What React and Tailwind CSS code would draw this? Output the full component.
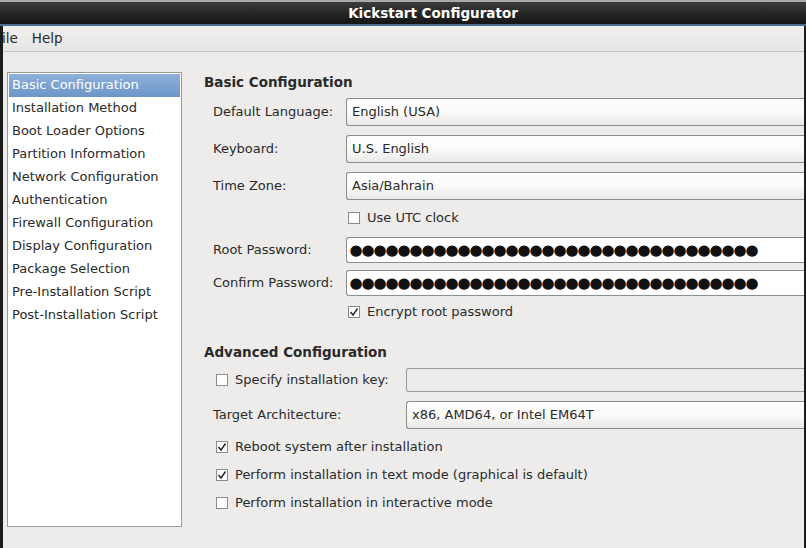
import React from 'react'

const font = { fontFamily: '"DejaVu Sans", "Liberation Sans", sans-serif' }

const navItems = [
  'Basic Configuration',
  'Installation Method',
  'Boot Loader Options',
  'Partition Information',
  'Network Configuration',
  'Authentication',
  'Firewall Configuration',
  'Display Configuration',
  'Package Selection',
  'Pre-Installation Script',
  'Post-Installation Script',
]

function Check({ checked }) {
  return (
    <span className="w-[12px] h-[12px] border border-[#8a8a88] bg-white flex items-center justify-center shrink-0">
      {checked && (
        <svg width="10" height="10" viewBox="0 0 10 10">
          <path d="M1.5 5 L4 8 L8.5 1.5" fill="none" stroke="#222" strokeWidth="1.4" />
        </svg>
      )}
    </span>
  )
}

function Combo({ value }) {
  return (
    <div className="flex-1 h-[28px] border border-[#8c8c8a] border-r-0 rounded-l-[3px] bg-gradient-to-b from-[#fdfdfd] via-[#fbfbfa] to-[#e9e8e6] flex items-center pl-[5px]">
      <span>{value}</span>
    </div>
  )
}

const dots = Array.from({ length: 34 }, (_, i) => i)

function Password() {
  return (
    <div className="flex-1 h-[26px] border border-[#8c8c8a] border-r-0 rounded-l-[3px] bg-white flex items-center pl-[3px] overflow-hidden">
      {dots.map((i) => (
        <span key={i} className="w-[12px] shrink-0 flex justify-center text-[15px] leading-none text-[#111]">
          ●
        </span>
      ))}
    </div>
  )
}

export default function App() {
  return (
    <div className="w-[806px] h-[548px] flex flex-col bg-[#edeceb] text-[13px] text-[#2a2a2a] overflow-hidden" style={font}>
      {/* title bar */}
      <div className="h-[26px] shrink-0 border-t-2 border-[#a8a8a8] border-b-2 border-b-[#4f6f8f] bg-gradient-to-b from-[#3c3c3c] to-[#151515] flex items-center justify-center">
        <span className="text-white font-bold text-[13.5px] ml-[60px]">Kickstart Configurator</span>
      </div>

      <div className="flex-1 flex flex-col border-l-[3px] border-l-[#1c1c1c] border-r-[2px] border-r-[#1c1c1c]">
        {/* menu bar */}
        <div className="h-[26px] shrink-0 bg-gradient-to-b from-[#f1f0ef] to-[#e7e6e4] border-b border-[#c4c3c1] flex items-center gap-[14px] text-[13.5px]">
          <span className="-ml-[1px]">ile</span>
          <span>Help</span>
        </div>

        <div className="flex-1 flex">
          {/* left list */}
          <div className="pl-[4px] pt-[20px] pb-[21px]">
            <div className="w-[175px] h-full bg-white border border-[#9a9a98] p-[1px]">
              {navItems.map((item, i) => (
                <div
                  key={item}
                  className={
                    i === 0
                      ? 'h-[23px] flex items-center pl-[3px] pb-[1px] text-white bg-gradient-to-b from-[#8eb0dc] to-[#6d95c9]'
                      : 'h-[23px] flex items-center pl-[3px] pb-[1px]'
                  }
                >
                  {item}
                </div>
              ))}
            </div>
          </div>

          {/* right panel */}
          <div className="flex-1 flex flex-col pl-[22px] pt-[22px]">
            <div className="h-[16px] flex items-center font-bold text-[13.5px]">Basic Configuration</div>

            <div className="flex items-center mt-[8px] pl-[9px]">
              <span className="w-[133px]">Default Language:</span>
              <Combo value="English (USA)" />
            </div>
            <div className="flex items-center mt-[9px] pl-[9px]">
              <span className="w-[133px]">Keyboard:</span>
              <Combo value="U.S. English" />
            </div>
            <div className="flex items-center mt-[9px] pl-[9px]">
              <span className="w-[133px]">Time Zone:</span>
              <Combo value="Asia/Bahrain" />
            </div>
            <div className="h-[26px] mt-[5px] flex items-center gap-[7px] pl-[144px]">
              <Check />
              <span>Use UTC clock</span>
            </div>
            <div className="flex items-center mt-[6px] pl-[9px]">
              <span className="w-[133px]">Root Password:</span>
              <Password />
            </div>
            <div className="flex items-center mt-[7px] pl-[9px]">
              <span className="w-[133px]">Confirm Password:</span>
              <Password />
            </div>
            <div className="h-[26px] mt-[3px] flex items-center gap-[7px] pl-[144px]">
              <Check checked />
              <span>Encrypt root password</span>
            </div>

            <div className="h-[16px] mt-[19px] flex items-center font-bold text-[13.5px]">Advanced Configuration</div>

            <div className="flex items-center mt-[8px] pl-[12px]">
              <div className="w-[190px] flex items-center gap-[7px]">
                <Check />
                <span>Specify installation key:</span>
              </div>
              <div className="flex-1 h-[24px] border border-[#9a9a98] border-r-0 rounded-l-[3px] bg-[#edeceb]" />
            </div>
            <div className="flex items-center mt-[9px] pl-[9px]">
              <span className="w-[193px]">Target Architecture:</span>
              <Combo value="x86, AMD64, or Intel EM64T" />
            </div>
            <div className="h-[26px] mt-[5px] flex items-center gap-[7px] pl-[12px]">
              <Check checked />
              <span>Reboot system after installation</span>
            </div>
            <div className="h-[26px] mt-[2px] flex items-center gap-[7px] pl-[12px]">
              <Check checked />
              <span>Perform installation in text mode (graphical is default)</span>
            </div>
            <div className="h-[26px] mt-[2px] flex items-center gap-[7px] pl-[12px]">
              <Check />
              <span>Perform installation in interactive mode</span>
            </div>
          </div>
        </div>
      </div>
    </div>
  )
}
